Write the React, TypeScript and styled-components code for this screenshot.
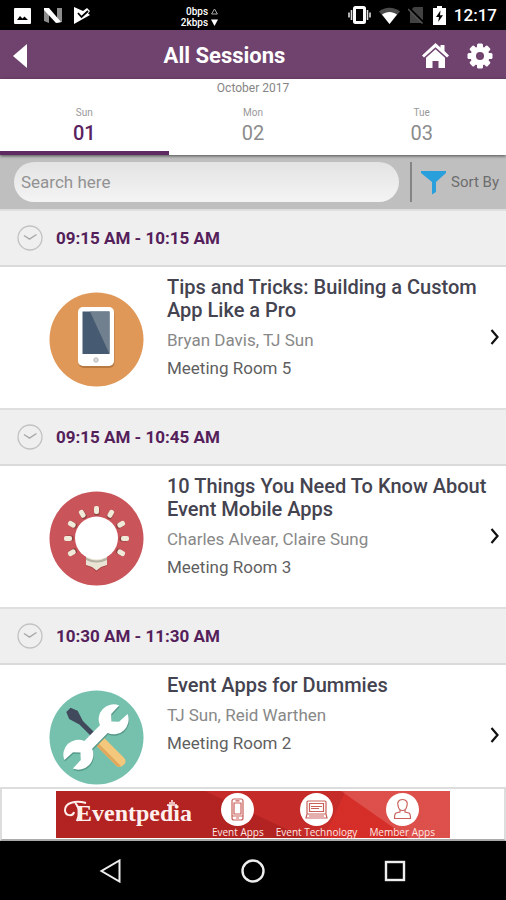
import React from "react";
import styled, { createGlobalStyle } from "styled-components";

const GlobalStyle = createGlobalStyle`
  * { box-sizing: border-box; }
  html, body { margin: 0; padding: 0; background: #fff; }
  body { font-family: Roboto, "Noto Sans", sans-serif; color: #45444c; }
  button, input { font-family: inherit; }
  h1, h2, h3, p { margin: 0; }
  svg { display: block; flex: none; }
`;

const Screen = styled.div`
  display: flex;
  flex-direction: column;
  height: 100vh;
  overflow: hidden;
  background: #fff;
`;

/* System status bar */

const StatusBar = styled.div`
  flex: none;
  display: grid;
  grid-template-columns: 1fr auto 1fr;
  align-items: center;
  height: 30px;
  padding: 0 9px 0 14px;
  background: #000;
  color: #fff;
`;

const StatusGroup = styled.div<{ $end?: boolean }>`
  display: flex;
  align-items: center;
  justify-content: ${(p) => (p.$end ? "flex-end" : "flex-start")};
  gap: ${(p) => (p.$end ? "8px" : "12px")};
`;

const Speed = styled.div`
  display: grid;
  justify-items: end;
  margin-right: 112px;
  padding-top: 3px;
  font-size: 10px;
  font-weight: 500;
  line-height: 11px;
  white-space: nowrap;
`;

const SpeedLine = styled.span`
  display: flex;
  align-items: center;
  gap: 3px;
`;

const Clock = styled.span`
  font-size: 17px;
  font-weight: 500;
  line-height: 20px;
`;

/* App header */

const Header = styled.header`
  flex: none;
  display: flex;
  justify-content: space-between;
  align-items: center;
  height: 49px;
  padding: 2px 13px 0;
  background: #70436f;
`;

const HeaderActions = styled.div`
  display: flex;
  gap: 18px;
`;

const IconButton = styled.button`
  display: inline-flex;
  padding: 0;
  border: 0;
  background: none;
  color: #fff;
  cursor: pointer;
`;

const PageTitle = styled.h1`
  font-size: 22px;
  font-weight: 700;
  line-height: 28px;
  color: #fff;
`;

/* Date strip */

const DateStrip = styled.nav`
  flex: none;
  position: relative;
  z-index: 1;
  background: #fff;
  box-shadow: 0 1px 3px rgba(0, 0, 0, 0.6);
`;

const Month = styled.p`
  padding-top: 2px;
  font-size: 12px;
  line-height: 14px;
  text-align: center;
  color: #858585;
`;

const Days = styled.div`
  display: grid;
  grid-template-columns: repeat(3, 1fr);
  padding-top: 11px;
`;

const Day = styled.button<{ $active?: boolean }>`
  display: grid;
  justify-items: center;
  gap: 2px;
  padding: 2px 0 5px;
  border: 0;
  border-bottom: 4px solid ${(p) => (p.$active ? "#5e2a62" : "transparent")};
  background: none;
  color: ${(p) => (p.$active ? "#5a2260" : "#8c8c8c")};
  font-weight: ${(p) => (p.$active ? 500 : 400)};
  cursor: pointer;
`;

const DayName = styled.span`
  font-size: 10px;
  font-weight: 400;
  line-height: 10px;
  color: #999;
`;

const DayNumber = styled.span`
  font-size: 20px;
  line-height: 26px;
`;

/* Search */

const SearchBar = styled.div`
  flex: none;
  display: flex;
  align-items: center;
  height: 54px;
  padding: 0 7px 0 14px;
  background: #bfbfbf;
`;

const SearchInput = styled.input`
  flex: 1;
  min-width: 0;
  height: 40px;
  padding: 0 7px;
  border: 0;
  border-radius: 20px;
  background: linear-gradient(#e3e3e3, #f4f4f4);
  font-size: 17px;
  color: #555;
  outline: none;
  &::placeholder { color: #929292; opacity: 1; }
`;

const SortButton = styled.button`
  display: flex;
  align-items: center;
  gap: 5px;
  height: 40px;
  margin-left: 11px;
  padding: 0 0 0 9px;
  border: 0;
  border-left: 2px solid #858585;
  background: none;
  font-size: 15px;
  color: #6d6d6d;
  white-space: nowrap;
  cursor: pointer;
`;

/* Session list */

const SessionList = styled.main`
  flex: 1;
  min-height: 0;
  overflow-y: auto;
  scrollbar-width: none;
`;

const TimeHeader = styled.h2`
  display: flex;
  align-items: center;
  gap: 13px;
  height: 58px;
  padding: 0 17px;
  border-top: 2px solid #dfdfdf;
  border-bottom: 2px solid #dadada;
  background: #efefef;
  font-size: 17px;
  font-weight: 700;
  line-height: 24px;
  color: #54205a;
`;

const SessionLink = styled.a`
  display: grid;
  grid-template-columns: 95px 1fr 10px;
  column-gap: 23px;
  min-height: 141px;
  padding: 9px 6px 11px 49px;
  color: inherit;
  text-decoration: none;
`;

const Badge = styled.div`
  align-self: center;
  padding-top: 5px;
`;

const Details = styled.div`
  display: flex;
  flex-direction: column;
  margin-right: -20px;
`;

const SessionTitle = styled.h3`
  margin-bottom: 4px;
  font-size: 20px;
  font-weight: 500;
  line-height: 23px;
  color: #444350;
`;

const Line = styled.p<{ $strong?: boolean }>`
  font-size: 17px;
  line-height: 28px;
  color: ${(p) => (p.$strong ? "#5f5f5f" : "#888")};
`;

const ChevronCell = styled.div`
  align-self: center;
`;

/* Sponsor banner */

const BannerArea = styled.aside`
  flex: none;
  padding: 2px 0 1px;
  border: 2px solid #ddd;
  border-bottom-color: #aaa;
  background: #fff;
`;

const Banner = styled.div`
  display: flex;
  align-items: flex-start;
  width: 100%;
  max-width: 394px;
  height: 47px;
  margin: 0 auto;
  padding: 0 15px 0 6px;
  background:
    linear-gradient(215deg, rgba(255, 255, 255, 0.16) 0 62px, transparent 63px),
    linear-gradient(115deg, transparent 0 262px, rgba(230, 50, 40, 0.5) 263px),
    linear-gradient(25deg, rgba(120, 10, 10, 0.25) 0 105px, transparent 106px),
    #c52b29;
`;

const BannerLinks = styled.div`
  flex: 1;
  display: flex;
  justify-content: flex-end;
  gap: 12px;
`;

const BannerLink = styled.a`
  display: grid;
  justify-items: center;
  padding-top: 2px;
  font-family: "Open Sans", sans-serif;
  font-size: 10px;
  line-height: 12px;
  color: #ffe9e4;
  text-decoration: none;
  white-space: nowrap;
`;

/* System navigation bar */

const NavBar = styled.nav`
  flex: none;
  display: flex;
  align-items: center;
  justify-content: center;
  gap: 118px;
  height: 59px;
  background: #000;
`;

/* Drawings */

const PictureIcon = () => (
  <svg width="17" height="17" viewBox="0 0 17 17">
    <rect x="0" y="1" width="17" height="16" rx="1" fill="#fff" />
    <path d="M3 13l3-4 2.500 2.500 2-2L14 13z" fill="#000" />
  </svg>
);

const NIcon = () => (
  <svg width="19" height="17" viewBox="0 0 19 17">
    <path d="M1 1h5v15l-5-2zM14 1h5v14l-5 1z" fill="#8d8d8d" />
    <path d="M1 1h5l12 14-5 1L1 3z" fill="#fff" />
  </svg>
);

const PlayCheckIcon = () => (
  <svg width="17" height="17" viewBox="0 0 17 17">
    <path d="M0 0l9 4 4-3 3 3-2 2.500 2 1.500L0 17z" fill="#fff" />
    <path d="M4 6l3.500 4L14 4" fill="none" stroke="#000" strokeWidth="1.800" />
  </svg>
);

const VibrateIcon = () => (
  <svg width="23" height="18" viewBox="0 0 23 18">
    <rect x="6.500" y="1.500" width="10" height="15" rx="1" fill="none" stroke="#fff" strokeWidth="3" />
    <path d="M3.500 4v10M19.500 4v10M1 6.500v5M22 6.500v5" stroke="#ddd" strokeWidth="1.600" />
  </svg>
);

const WifiIcon = () => (
  <svg width="21" height="17" viewBox="0 0 21 17">
    <path d="M0 4.500C6-.5 15-.5 21 4.500L10.500 17z" fill="#4b4b4b" />
    <path d="M3 7.500c4.500-3.500 10.500-3.500 15 0L10.500 17z" fill="#fff" />
  </svg>
);

const NoSimIcon = () => (
  <svg width="17" height="18" viewBox="0 0 17 18">
    <path d="M2 5l4-4h9v16H2z" fill="#424242" />
    <path d="M1 2l15 15" stroke="#000" strokeWidth="2.400" />
    <path d="M0 3l14.500 14.500" stroke="#555" strokeWidth="1.400" />
  </svg>
);

const BatteryIcon = () => (
  <svg width="13" height="19" viewBox="0 0 13 19">
    <path d="M0 2h4V0h5v2h4v17H0z" fill="#fff" />
    <path d="M7.500 4.500L3 11h3l-.8 5L10 9.200H7z" fill="#000" />
  </svg>
);

const SmallTriangle = ({ down }: { down?: boolean }) => (
  <svg width="7" height="7" viewBox="0 0 7 7">
    {down ? (
      <path d="M0 .5h7L3.500 7z" fill="#fff" />
    ) : (
      <path d="M3.500 1L6.400 6H.6z" fill="none" stroke="#aaa" />
    )}
  </svg>
);

const HomeIcon = () => (
  <svg width="27" height="26" viewBox="0 0 27 26">
    <path d="M13.500 0l5 4.500V2h4v6l4.500 4.500-2 2L13.500 4.200 2 14.500l-2-2z" fill="#fff" />
    <path d="M13.500 6.200l9.500 8.500V25h-6.500v-7h-6v7H4V14.700z" fill="#fff" />
  </svg>
);

const GearIcon = () => (
  <svg width="26" height="26" viewBox="0 0 26 26">
    <g fill="#fff">
      {[0, 45, 90, 135].map((a) => (
        <rect key={a} x="10" y="0.500" width="6" height="25" rx="1.500" transform={`rotate(${a} 13 13)`} />
      ))}
      <circle cx="13" cy="13" r="9.500" />
    </g>
    <circle cx="13" cy="13" r="4" fill="#70436f" />
  </svg>
);

const FunnelIcon = () => (
  <svg width="25" height="25" viewBox="0 0 25 25">
    <path d="M0 1h25v2l-10 9v10l-4 2.500V12L0 3z" fill="#29a0dc" />
  </svg>
);

const ClockIcon = () => (
  <svg width="26" height="26" viewBox="0 0 26 26" fill="none">
    <circle cx="13" cy="13" r="12" stroke="#c2c2c2" strokeWidth="1.300" />
    <path d="M7 10.500l5.500 3.700L19.500 9.500" stroke="#a9a9a9" strokeWidth="1.400" />
  </svg>
);

const ChevronIcon = () => (
  <svg width="10" height="16" viewBox="0 0 10 16">
    <path d="M1.500 1l6 7-6 7" fill="none" stroke="#111" strokeWidth="2.200" />
  </svg>
);

const PhoneBadge = () => (
  <svg width="95" height="95" viewBox="0 0 95 95">
    <circle cx="47.500" cy="47.500" r="47" fill="#df9857" />
    <rect x="29.500" y="17" width="36" height="59" rx="5" fill="#b97a42" />
    <rect x="29" y="15" width="36" height="59" rx="5" fill="#fff" />
    <rect x="33.500" y="19.500" width="27" height="42.500" fill="#465a72" />
    <path d="M41 19.500h19.500V62z" fill="#70808f" />
    <circle cx="47" cy="68" r="2.200" fill="#ddd" stroke="#b8b8b8" />
  </svg>
);

const BulbBadge = () => (
  <svg width="95" height="95" viewBox="0 0 95 95">
    <circle cx="47.500" cy="47.500" r="47" fill="#c9545a" />
    {[-120, -90, -60, -30, 0, 30, 60, 90, 120].map((a) => (
      <g key={a} transform={`rotate(${a} 47.500 47.500)`}>
        <rect x="45" y="16" width="5.500" height="8.500" rx="2" fill="#8f4341" />
        <rect x="45" y="15" width="5" height="8" rx="2" fill="#f0ead9" />
      </g>
    ))}
    <path d="M37 62v13l6 2 4.500 4 4.500-4 6-2V62z" fill="#a94549" />
    <path d="M37 60v14l6 2 4.500 3.500L52 76l6-2V60z" fill="#e9e4d3" />
    <path d="M37 66.500q10.500 6 21 0v2.500q-10.500 5-21 0z" fill="#b5b1a3" />
    <circle cx="47.500" cy="47" r="21.500" fill="#fff" />
  </svg>
);

const WrenchShape = () => (
  <path d="M-5.500-11A15 15 0 0 1-6-38.700L-5.500-27 0-22 5.500-27 6-38.700A15 15 0 0 1 5.500-11V11A15 15 0 0 1 6 38.700L5.500 27 0 22-5.500 27-6 38.700A15 15 0 0 1-5.500 11z" />
);

const ToolsBadge = () => (
  <svg width="95" height="95" viewBox="0 0 95 95">
    <circle cx="47.500" cy="47.500" r="47" fill="#76c1ae" />
    <g transform="translate(47 47.500) rotate(-45)">
      <path d="M-3-39h6l3 7-3.500 11V0h-5v-21L-6-32z" fill="#404a5c" />
      <path d="M-5.500 4h11v30q0 5-5.500 5t-5.500-5z" fill="#f3c77c" />
      <path d="M-5.500 4h3v34q-3-1-3-4z" fill="#dfa85d" />
    </g>
    <g transform="translate(47.500 48.500) rotate(45)" fill="#579989">
      <WrenchShape />
    </g>
    <g transform="translate(47 47) rotate(45)" fill="#fff">
      <WrenchShape />
    </g>
  </svg>
);

const Logo = () => (
  <svg width="132" height="44" viewBox="0 0 132 44" role="img" aria-label="Eventpedia">
    <path d="M24 12C13 9 3 12 3 19c0 6 8 7 9 2M13 12c4 3 5 11 2 18" fill="none" stroke="#fff0ed" strokeWidth="2" />
    <text x="14" y="30" fill="#fff0ed" fontFamily="Liberation Serif, serif" fontSize="24" fontWeight="700">
      Eventpedia
    </text>
    <path d="M105 14h10M107 12h6M109 10h2" stroke="#fff0ed" strokeWidth="1.400" />
  </svg>
);

const BannerIcon = ({ kind }: { kind: string }) => (
  <svg width="33" height="33" viewBox="0 0 33 33" fill="none" stroke="#c9605a" strokeWidth="1.200">
    <circle cx="16.500" cy="16.500" r="16.500" fill="#fff" stroke="none" />
    {kind === "phone" && (
      <g>
        <rect x="11" y="6" width="11" height="21" rx="2" />
        <path d="M13 10h7v11h-7zM11 23h11M14.500 7.800h4M15 25h3M20 10v11" />
      </g>
    )}
    {kind === "laptop" && (
      <g>
        <rect x="7" y="8" width="19" height="13" rx="1" />
        <path d="M9.500 10.500h14v8h-14zM11 13.500h11M11 15.500h8M7 21l-1 4h21l-1-4M9 23h15" />
      </g>
    )}
    {kind === "member" && (
      <g>
        <path d="M16.500 6.500c-4 0-5.500 3-4.500 6 .5 3 2 5 4.500 5s4-2 4.500-5c1-3-.5-6-4.500-6z" />
        <path d="M14 17v2l-4 1c-1.500 1-1.500 2.500-1.500 5.500h16c0-3 0-4.500-1.500-5.500l-4-1v-2" />
      </g>
    )}
  </svg>
);

const days = [
  { name: "Sun", number: "01" },
  { name: "Mon", number: "02" },
  { name: "Tue", number: "03" },
];

const sessions = [
  {
    time: "09:15 AM - 10:15 AM",
    title: "Tips and Tricks: Building a Custom App Like a Pro",
    speakers: "Bryan Davis, TJ Sun",
    room: "Meeting Room 5",
    badge: <PhoneBadge />,
  },
  {
    time: "09:15 AM - 10:45 AM",
    title: "10 Things You Need To Know About Event Mobile Apps",
    speakers: "Charles Alvear, Claire Sung",
    room: "Meeting Room 3",
    badge: <BulbBadge />,
  },
  {
    time: "10:30 AM - 11:30 AM",
    title: "Event Apps for Dummies",
    speakers: "TJ Sun, Reid Warthen",
    room: "Meeting Room 2",
    badge: <ToolsBadge />,
  },
];

const bannerLinks = [
  { label: "Event Apps", kind: "phone" },
  { label: "Event Technology", kind: "laptop" },
  { label: "Member Apps", kind: "member" },
];

export default function App() {
  return (
    <Screen>
      <GlobalStyle />
      <StatusBar>
        <StatusGroup>
          <PictureIcon />
          <NIcon />
          <PlayCheckIcon />
        </StatusGroup>
        <Speed>
          <SpeedLine>0bps <SmallTriangle /></SpeedLine>
          <SpeedLine>2kbps <SmallTriangle down /></SpeedLine>
        </Speed>
        <StatusGroup $end>
          <VibrateIcon />
          <WifiIcon />
          <NoSimIcon />
          <BatteryIcon />
          <Clock>12:17</Clock>
        </StatusGroup>
      </StatusBar>

      <Header>
        <IconButton aria-label="Back">
          <svg width="14" height="24" viewBox="0 0 14 24">
            <path d="M14 0v24L0 12z" fill="#fff" />
          </svg>
        </IconButton>
        <PageTitle>All Sessions</PageTitle>
        <HeaderActions>
          <IconButton aria-label="Home"><HomeIcon /></IconButton>
          <IconButton aria-label="Settings"><GearIcon /></IconButton>
        </HeaderActions>
      </Header>

      <DateStrip aria-label="Days">
        <Month>October 2017</Month>
        <Days>
          {days.map((d, i) => (
            <Day key={d.number} $active={i === 0} aria-pressed={i === 0}>
              <DayName>{d.name}</DayName>
              <DayNumber>{d.number}</DayNumber>
            </Day>
          ))}
        </Days>
      </DateStrip>

      <SearchBar>
        <SearchInput type="search" placeholder="Search here" aria-label="Search sessions" />
        <SortButton>
          <FunnelIcon />
          Sort By
        </SortButton>
      </SearchBar>

      <SessionList>
        {sessions.map((s) => (
          <section key={s.title}>
            <TimeHeader>
              <ClockIcon />
              {s.time}
            </TimeHeader>
            <SessionLink href="#session">
              <Badge>{s.badge}</Badge>
              <Details>
                <SessionTitle>{s.title}</SessionTitle>
                <Line>{s.speakers}</Line>
                <Line $strong>{s.room}</Line>
              </Details>
              <ChevronCell><ChevronIcon /></ChevronCell>
            </SessionLink>
          </section>
        ))}
      </SessionList>

      <BannerArea aria-label="Sponsor">
        <Banner>
          <Logo />
          <BannerLinks>
            {bannerLinks.map((b) => (
              <BannerLink key={b.label} href="#sponsor">
                <BannerIcon kind={b.kind} />
                {b.label}
              </BannerLink>
            ))}
          </BannerLinks>
        </Banner>
      </BannerArea>

      <NavBar aria-label="System">
        <IconButton aria-label="System back">
          <svg width="24" height="24" viewBox="0 0 24 24">
            <path d="M20.500 1.500v21L2.500 12z" fill="none" stroke="#eee" strokeWidth="2" />
          </svg>
        </IconButton>
        <IconButton aria-label="System home">
          <svg width="24" height="24" viewBox="0 0 24 24">
            <circle cx="12" cy="12" r="10.500" fill="none" stroke="#eee" strokeWidth="2.400" />
          </svg>
        </IconButton>
        <IconButton aria-label="Recent apps">
          <svg width="24" height="24" viewBox="0 0 24 24">
            <rect x="3" y="3" width="18" height="18" fill="none" stroke="#eee" strokeWidth="2.400" />
          </svg>
        </IconButton>
      </NavBar>
    </Screen>
  );
}
